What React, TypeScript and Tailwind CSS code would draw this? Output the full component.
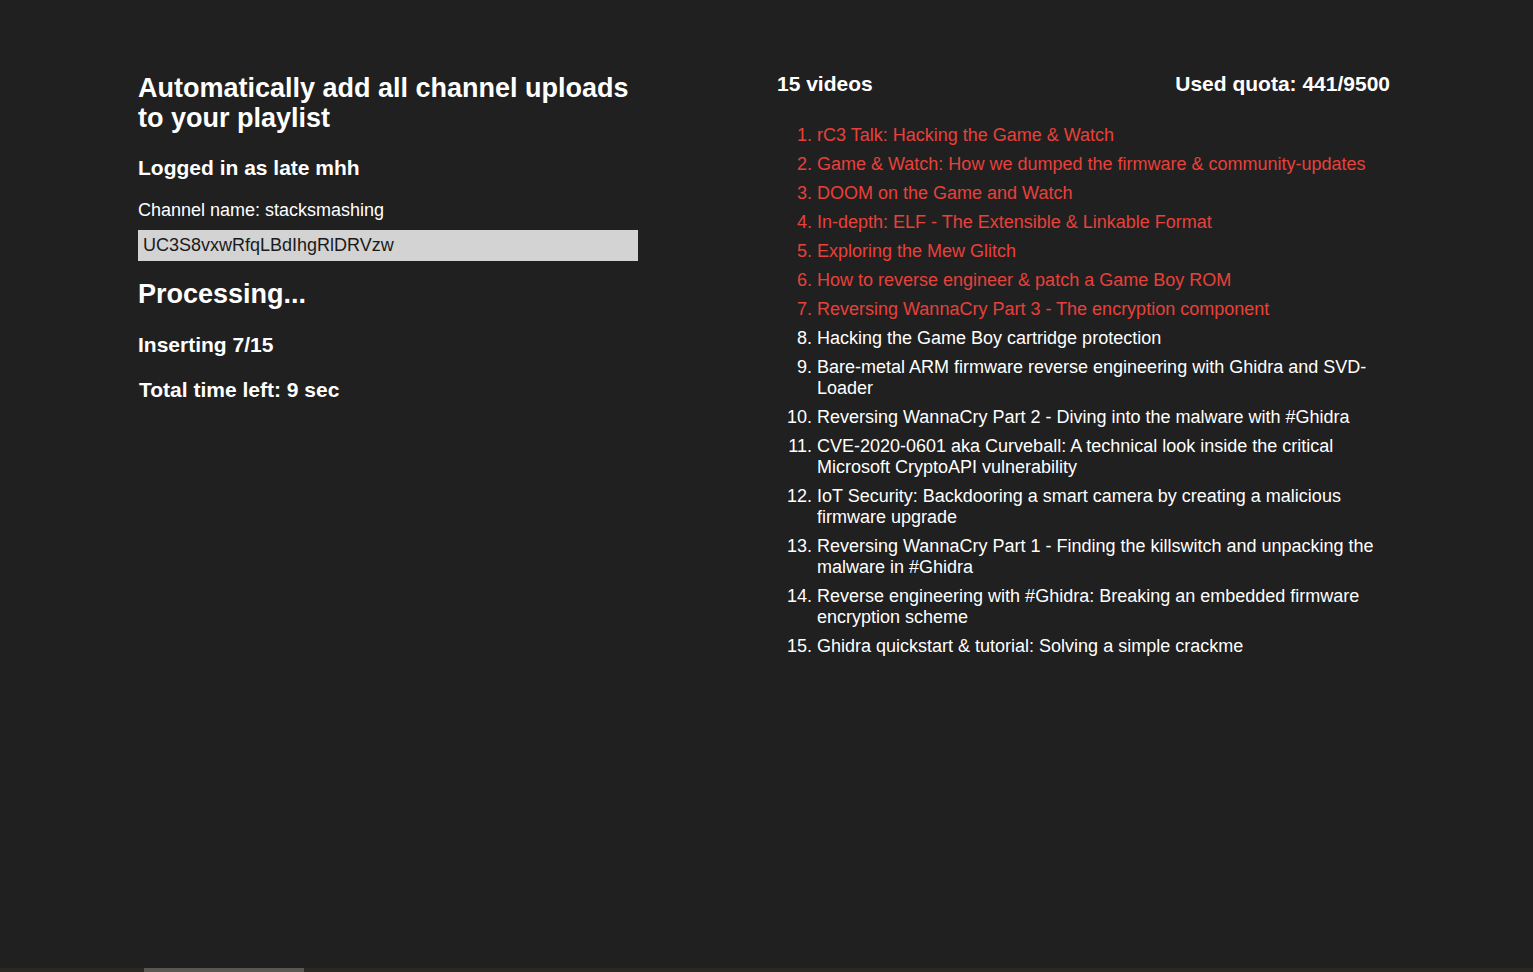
// Channel-uploads-to-playlist tool: status panel on the left, video list on the right.

const videos = [
  "rC3 Talk: Hacking the Game & Watch",
  "Game & Watch: How we dumped the firmware & community-updates",
  "DOOM on the Game and Watch",
  "In-depth: ELF - The Extensible & Linkable Format",
  "Exploring the Mew Glitch",
  "How to reverse engineer & patch a Game Boy ROM",
  "Reversing WannaCry Part 3 - The encryption component",
  "Hacking the Game Boy cartridge protection",
  "Bare-metal ARM firmware reverse engineering with Ghidra and SVD-Loader",
  "Reversing WannaCry Part 2 - Diving into the malware with #Ghidra",
  "CVE-2020-0601 aka Curveball: A technical look inside the critical Microsoft CryptoAPI vulnerability",
  "IoT Security: Backdooring a smart camera by creating a malicious firmware upgrade",
  "Reversing WannaCry Part 1 - Finding the killswitch and unpacking the malware in #Ghidra",
  "Reverse engineering with #Ghidra: Breaking an embedded firmware encryption scheme",
  "Ghidra quickstart & tutorial: Solving a simple crackme",
];

const inserted = 7; // items already added show in red

export default function App() {
  return (
    <div className="flex min-h-screen flex-col bg-[#202020] font-['Liberation_Sans',Arial,sans-serif] text-white">
      <main className="ml-[138px] flex flex-1 pt-[72px]">
        {/* left: status */}
        <section className="w-[500px] flex-none">
          <h1 className="mt-px text-[27px] font-bold leading-[30px]">
            Automatically add all channel uploads
            <br />
            to your playlist
          </h1>
          <h3 className="mt-[23px] text-[21px] font-bold leading-[24px]">Logged in as late mhh</h3>
          <p className="mt-[20px] text-[18px] leading-[21px]">Channel name: stacksmashing</p>
          <input
            readOnly
            value="UC3S8vxwRfqLBdIhgRlDRVzw"
            className="mt-[9px] block h-[31px] w-[500px] bg-[#d3d3d3] px-[5px] text-[18px] text-[#1a1a1a] outline-none"
          />
          <h2 className="mt-[18px] text-[27px] font-bold leading-[31px]">Processing...</h2>
          <h3 className="mt-[23px] text-[21px] font-bold leading-[24px]">Inserting 7/15</h3>
          <h3 className="ml-px mt-[21px] text-[21px] font-bold leading-[24px]">Total time left: 9 sec</h3>
        </section>

        {/* right: videos */}
        <section className="ml-[139px] w-[613px] flex-none">
          <div className="flex justify-between text-[21px] font-bold leading-[24px]">
            <span>15 videos</span>
            <span>Used quota: 441/9500</span>
          </div>
          <ol className="mt-[29px] list-decimal pl-[40px] text-[18px] leading-[21px]">
            {videos.map((title, i) => (
              <li
                key={i}
                className={`${i > 0 ? "mt-[8px]" : ""} pr-[16px] ${i < inserted ? "text-[#e8403a]" : "text-white"}`}
              >
                {title}
              </li>
            ))}
          </ol>
        </section>
      </main>

      {/* bottom strip */}
      <div className="flex h-[4px] bg-[#2b2723]">
        <div className="ml-[144px] w-[160px] bg-[#5a5750]" />
      </div>
    </div>
  );
}
